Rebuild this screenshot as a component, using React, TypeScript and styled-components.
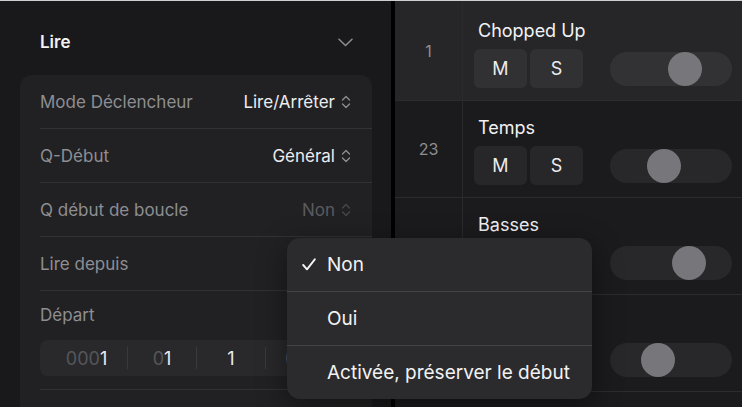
import * as React from 'react'
import styled, {createGlobalStyle} from 'styled-components'

const GlobalStyle = createGlobalStyle`
  html, body {
    margin: 0;
    padding: 0;
    background: #19191b;
  }
  body {
    font-family: Inter, "Noto Sans", "Liberation Sans", sans-serif;
    -webkit-font-smoothing: antialiased;
  }
  * {
    box-sizing: border-box;
  }
`

const Screen = styled.div`
  position: relative;
  width: 742px;
  height: 407px;
  overflow: hidden;
  display: flex;
  border-top: 1px solid #cfcfd1;
  background: #19191b;
`

const Inspector = styled.div`
  width: 391px;
  flex-shrink: 0;
  display: flex;
  flex-direction: column;
  background: #19191b;
`

const Splitter = styled.div`
  width: 4px;
  flex-shrink: 0;
  background: #000;
`

const SectionHeader = styled.div`
  height: 74px;
  padding: 8px 38px 0 40px;
  display: flex;
  align-items: center;
  justify-content: space-between;
  color: #f2f2f4;
  font-size: 17px;
  font-weight: 600;
`

const Card = styled.div`
  margin: 0 19px 0 20px;
  flex: 1;
  background: #212123;
  border-radius: 12px 12px 0 0;
`

const Row = styled.div`
  height: 54px;
  margin-left: 20px;
  padding-right: 21px;
  display: flex;
  align-items: center;
  justify-content: space-between;
  border-bottom: 1px solid #323234;
`

const Label = styled.span`
  color: #8e8e93;
  font-size: 17px;
`

const Value = styled.span<{$dim?: boolean}>`
  display: flex;
  align-items: center;
  gap: 6px;
  color: ${p => (p.$dim ? '#5b5b5f' : '#ececee')};
  font-size: 17px;
`

const StartBlock = styled.div`
  margin-left: 20px;
  padding: 14px 20px 13px 0;
  display: flex;
  flex-direction: column;
  gap: 15px;
  border-bottom: 1px solid #323234;
`

const StartLabel = styled(Label)`
  line-height: 20px;
`

const PositionField = styled.div`
  height: 36px;
  padding: 0 18px;
  display: grid;
  grid-template-columns: repeat(4, 69px);
  align-items: center;
  background: #29292b;
  border-radius: 8px;
`

const Segment = styled.div<{$first?: boolean}>`
  height: 22px;
  display: flex;
  align-items: center;
  justify-content: center;
  padding-right: ${p => (p.$first ? 12 : 0)}px;
  font-size: 18px;
  color: #ececee;
  border-left: ${p => (p.$first ? 'none' : '1px solid #3a3a3c')};
`

const Zeros = styled.span`
  color: #56565a;
`

const Tracks = styled.div`
  flex: 1;
  display: flex;
  flex-direction: column;
  background: #1b1b1d;
`

const TrackRow = styled.div<{$first?: boolean; $selected?: boolean}>`
  height: ${p => (p.$first ? 100 : 97)}px;
  flex-shrink: 0;
  display: grid;
  grid-template-columns: 68px 1fr;
  background: ${p => (p.$selected ? '#262628' : '#1b1b1d')};
  border-bottom: 1px solid #2c2c2e;
`

const TrackNumber = styled.div`
  display: flex;
  align-items: center;
  justify-content: center;
  color: #8e8e93;
  font-size: 16px;
  border-right: 1px solid #2a2a2c;
`

const TrackBody = styled.div<{$first?: boolean}>`
  padding: ${p => (p.$first ? 20 : 17)}px 10px 0 11px;
  display: flex;
  flex-direction: column;
  gap: 8px;
`

const TrackName = styled.div`
  margin-left: 4px;
  line-height: 20px;
  color: #f2f2f4;
  font-size: 18px;
`

const Controls = styled.div`
  height: 39px;
  display: flex;
  align-items: center;
`

const ToggleButton = styled.div`
  width: 53px;
  height: 39px;
  margin-right: 3px;
  display: flex;
  align-items: center;
  justify-content: center;
  border-radius: 6px;
  background: rgba(255, 255, 255, 0.055);
  color: #ececee;
  font-size: 18px;
`

const VolumeTrack = styled.div`
  position: relative;
  width: 122px;
  height: 34px;
  margin-left: 24px;
  border-radius: 17px;
  background: rgba(255, 255, 255, 0.06);
`

const Knob = styled.div<{$pos: number}>`
  position: absolute;
  top: 0;
  left: ${p => p.$pos}px;
  width: 34px;
  height: 34px;
  border-radius: 50%;
  background: #77777b;
`

const Menu = styled.div`
  position: absolute;
  left: 287px;
  top: 237px;
  width: 305px;
  border-radius: 13px;
  background: #2b2b2d;
  box-shadow: 0 8px 30px rgba(0, 0, 0, 0.45);
  overflow: hidden;
`

const MenuItem = styled.div<{$last?: boolean}>`
  height: ${p => (p.$last ? 53 : 54)}px;
  display: flex;
  align-items: center;
  color: #f2f2f4;
  font-size: 19px;
  border-bottom: ${p => (p.$last ? 'none' : '1px solid #444446')};
`

const CheckSlot = styled.div`
  width: 40px;
  flex-shrink: 0;
  display: flex;
  padding-left: 15px;
`

const ChevronDown = () => (
  <svg width="15" height="9" viewBox="0 0 15 9">
    <polyline points="1,1.2 7.5,7.5 14,1.2" fill="none" stroke="#8e8e93" strokeWidth="1.5" strokeLinecap="round" strokeLinejoin="round"/>
  </svg>
)

const UpDown = ({dim}: {dim?: boolean}) => (
  <svg width="10" height="14" viewBox="0 0 10 14">
    <g fill="none" stroke={dim ? '#48484c' : '#8e8e93'} strokeWidth="1.3" strokeLinecap="round" strokeLinejoin="round">
      <polyline points="1.5,5 5,1.5 8.5,5"/>
      <polyline points="1.5,9 5,12.5 8.5,9"/>
    </g>
  </svg>
)

const Check = () => (
  <svg width="14" height="13" viewBox="0 0 14 13">
    <polyline points="1.2,7 5,11.3 12.8,1.3" fill="none" stroke="#f2f2f4" strokeWidth="1.9" strokeLinecap="round" strokeLinejoin="round"/>
  </svg>
)

const settings = [
  {label: 'Mode Déclencheur', value: 'Lire/Arrêter'},
  {label: 'Q-Début', value: 'Général'},
  {label: 'Q début de boucle', value: 'Non', dim: true},
  {label: 'Lire depuis', value: 'Non'},
]

const position = [
  {zeros: '000', digit: '1'},
  {zeros: '0', digit: '1'},
  {zeros: '', digit: '1'},
  {zeros: '00', digit: '1'},
]

const tracks = [
  {num: '1', name: 'Chopped Up', knob: 58, selected: true},
  {num: '23', name: 'Temps', knob: 37},
  {num: '24', name: 'Basses', knob: 62},
  {num: '25', name: 'Claviers', knob: 31},
]

const menuOptions = ['Non', 'Oui', 'Activée, préserver le début']

export default function App() {
  return (
    <>
      <GlobalStyle/>
      <Screen>
        <Inspector>
          <SectionHeader>
            <span>Lire</span>
            <ChevronDown/>
          </SectionHeader>
          <Card>
            {settings.map(s => (
              <Row key={s.label}>
                <Label>{s.label}</Label>
                <Value $dim={s.dim}>
                  {s.value}
                  <UpDown dim={s.dim}/>
                </Value>
              </Row>
            ))}
            <StartBlock>
              <StartLabel>Départ</StartLabel>
              <PositionField>
                {position.map((p, i) => (
                  <Segment key={i} $first={i === 0}>
                    <Zeros>{p.zeros}</Zeros>
                    {p.digit}
                  </Segment>
                ))}
              </PositionField>
            </StartBlock>
          </Card>
        </Inspector>
        <Splitter/>
        <Tracks>
          {tracks.map((t, i) => (
            <TrackRow key={t.num} $first={i === 0} $selected={t.selected}>
              <TrackNumber>{t.num}</TrackNumber>
              <TrackBody $first={i === 0}>
                <TrackName>{t.name}</TrackName>
                <Controls>
                  <ToggleButton>M</ToggleButton>
                  <ToggleButton>S</ToggleButton>
                  <VolumeTrack>
                    <Knob $pos={t.knob}/>
                  </VolumeTrack>
                </Controls>
              </TrackBody>
            </TrackRow>
          ))}
        </Tracks>
        <Menu>
          {menuOptions.map((opt, i) => (
            <MenuItem key={opt} $last={i === menuOptions.length - 1}>
              <CheckSlot>{i === 0 && <Check/>}</CheckSlot>
              {opt}
            </MenuItem>
          ))}
        </Menu>
      </Screen>
    </>
  )
}
